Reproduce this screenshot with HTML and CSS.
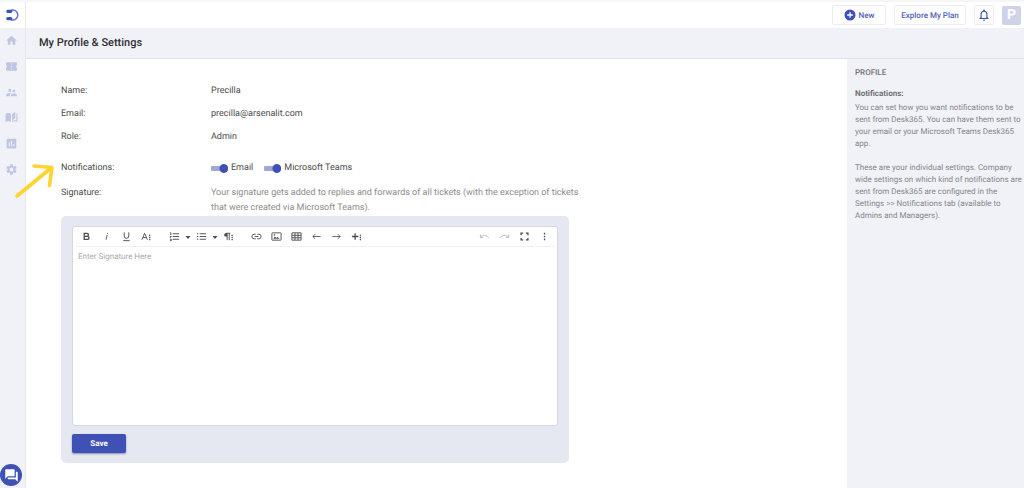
FILE: index.html
```
<!DOCTYPE html>
<html lang="en">
<head>
<meta charset="utf-8">
<title>My Profile &amp; Settings</title>
<link rel="stylesheet" href="styles.css">
</head>
<body>
<div class="app">
  <aside class="rail">
    <a class="logo" href="#" aria-label="Home page">
      <svg width="14" height="14" viewBox="0 0 14 14" fill="none"><path d="M6 2h2a4.500 4.700 0 0 1 0 10H6" stroke="#6572d0" stroke-width="1.500"/><path d="M2.800 3.300h3M2.800 10.700h3" stroke="#3f51b5" stroke-width="3.200" stroke-linecap="round"/></svg>
    </a>
    <nav class="nav">
      <a href="#" aria-label="Dashboard"><svg class="ico" viewBox="0 0 24 24"><path d="M10 20v-6h4v6h5v-8h3L12 3 2 12h3v8z"/></svg></a>
      <a href="#" aria-label="Tickets"><svg class="ico" viewBox="0 0 24 24"><path d="M22 10V5a1 1 0 0 0-1-1H3a1 1 0 0 0-1 1v5a2 2 0 0 1 0 4v5a1 1 0 0 0 1 1h18a1 1 0 0 0 1-1v-5a2 2 0 0 1 0-4zm-9 7.500h-2v-2h2v2zm0-4.500h-2v-2h2v2zm0-4.500h-2v-2h2v2z"/></svg></a>
      <a href="#" aria-label="Contacts"><svg class="ico" viewBox="0 0 24 24"><path d="M16.500 12a2.500 2.500 0 1 0 0-5 2.500 2.500 0 0 0 0 5zM9 11a3 3 0 1 0 0-6 3 3 0 0 0 0 6zm7.500 3c-1.830 0-5.500.92-5.500 2.750V19h11v-2.250C22 14.920 18.330 14 16.500 14zM9 13c-2.330 0-7 1.170-7 3.500V19h7v-2.250c0-.85.33-2.340 2.370-3.470C10.500 13.100 9.660 13 9 13z"/></svg></a>
      <a href="#" aria-label="Knowledge base"><svg class="ico" viewBox="0 0 24 24"><path d="M1 5c3-1.500 7-1.500 10 0v15c-3-1.500-7-1.500-10 0zM13 6l6-5v12l-6 5zM21 4l2 1v15c-3-1.500-7-1.500-10 0v-1.500c2-1 5-1.500 8-1z"/></svg></a>
      <a href="#" aria-label="Reports"><svg class="ico" viewBox="0 0 24 24"><path d="M19 3H5a2 2 0 0 0-2 2v14c0 1.100.9 2 2 2h14a2 2 0 0 0 2-2V5a2 2 0 0 0-2-2zM9 17H7v-7h2v7zm4 0h-2V7h2v10zm4 0h-2v-4h2v4z"/></svg></a>
      <a href="#" aria-label="Settings"><svg class="ico" viewBox="0 0 24 24"><path d="M19.140 12.940a7 7 0 0 0 0-1.880l2.030-1.580a.5.5 0 0 0 .12-.61l-1.920-3.320a.5.5 0 0 0-.59-.22l-2.390.96a7 7 0 0 0-1.620-.94l-.36-2.540A.5.5 0 0 0 13.920 2.400h-3.840a.5.5 0 0 0-.47.41l-.36 2.540c-.59.24-1.130.57-1.620.94l-2.390-.96a.5.5 0 0 0-.59.22L2.740 8.870a.5.5 0 0 0 .12.61l2.030 1.580a7 7 0 0 0 0 1.880l-2.030 1.580a.5.5 0 0 0-.12.61l1.920 3.320c.12.22.37.29.59.22l2.390-.96c.5.38 1.030.7 1.620.94l.36 2.540c.05.24.24.41.48.41h3.840c.24 0 .44-.17.47-.41l.36-2.540a7 7 0 0 0 1.620-.94l2.390.96c.22.08.47 0 .59-.22l1.920-3.320a.5.5 0 0 0-.12-.61zM12 15.600a3.600 3.600 0 1 1 0-7.200 3.600 3.600 0 0 1 0 7.200z"/></svg></a>
    </nav>
    <button class="chat" type="button" aria-label="Open chat"><svg width="15" height="15" viewBox="0 0 24 24" fill="#fff"><path d="M21 6h-2v9H6v2a1 1 0 0 0 1 1h11l4 4V7a1 1 0 0 0-1-1zm-4 6V3a1 1 0 0 0-1-1H3a1 1 0 0 0-1 1v14l4-4h10a1 1 0 0 0 1-1z"/></svg></button>
  </aside>

  <div class="page">
    <header class="topbar">
      <button class="btn btn-new" type="button"><svg width="12" height="12" viewBox="0 0 12 12"><circle cx="6" cy="6" r="5.500" fill="#3f51b5"/><path d="M6 3.200v5.600M3.200 6h5.600" stroke="#fff" stroke-width="1.300"/></svg>New</button>
      <button class="btn btn-plan" type="button">Explore My Plan</button>
      <button class="btn btn-bell" type="button" aria-label="Notifications"><svg width="14" height="14" viewBox="0 0 24 24" fill="#3f51b5"><path d="M12 22a2 2 0 0 0 2-2h-4c0 1.100.9 2 2 2zm6-6v-5c0-3.070-1.630-5.640-4.500-6.320V4a1.500 1.500 0 0 0-3 0v.68C7.640 5.360 6 7.920 6 11v5l-2 2v1h16v-1l-2-2zm-2 1H8v-6c0-2.480 1.510-4.500 4-4.500s4 2.020 4 4.500v6z"/></svg></button>
      <button class="avatar" type="button">P</button>
    </header>
    <div class="titlebar"><h1>My Profile &amp; Settings</h1></div>

    <div class="body">
      <main class="main">
        <svg class="arrow" width="44" height="38" viewBox="0 0 44 38" fill="none" stroke="#ffd42e" stroke-width="3.600" stroke-linecap="round" stroke-linejoin="round"><path d="M4 34 38 6M21 4l18 1.500-2.500 18"/></svg>
        <dl class="fields">
          <div class="row"><dt>Name:</dt><dd>Precilla</dd></div>
          <div class="row"><dt>Email:</dt><dd>precilla@arsenalit.com</dd></div>
          <div class="row"><dt>Role:</dt><dd>Admin</dd></div>
          <div class="row row-notify"><dt>Notifications:</dt><dd class="switches">
            <label class="switch"><input type="checkbox" role="switch" checked>Email</label>
            <label class="switch"><input type="checkbox" role="switch" checked>Microsoft Teams</label>
          </dd></div>
          <div class="row row-sign"><dt>Signature:</dt><dd>Your signature gets added to replies and forwards of all tickets (with the exception of tickets that were created via Microsoft Teams).</dd></div>
        </dl>
        <form class="panel">
          <div class="editor">
            <div class="toolbar" role="toolbar" aria-label="Formatting">
              <div class="group">
                <button type="button" aria-label="Bold"><svg viewBox="0 0 24 24"><path d="M7 5h6a3.200 3.200 0 0 1 0 6.500H7zM7 11.500h7a3.500 3.500 0 0 1 0 7H7z" class="heavy"/></svg></button>
                <button type="button" aria-label="Italic"><svg viewBox="0 0 24 24"><path d="M13.500 9 11 19M14.500 4l-.4 2"/></svg></button>
                <button type="button" aria-label="Underline"><svg viewBox="0 0 24 24"><path d="M7 3v8a5 5 0 0 0 10 0V3M5 21h14"/></svg></button>
                <button type="button" aria-label="More text"><svg viewBox="0 0 24 24"><path d="M2 19 8 5l6 14M4.500 14.500h7"/><path d="M19 8v3M19 12.500v3M19 17v3" class="heavy"/></svg></button>
              </div>
              <div class="group">
                <button type="button" aria-label="Ordered list"><svg viewBox="0 0 24 24"><path d="M8 6h14M8 12h14M8 18h14M2 4h2v5M2 12h3l-3 3M2 18h3v3H2"/></svg></button>
                <button class="caret" type="button" aria-label="Ordered list styles"><svg viewBox="0 0 8 8"><path d="M1.500 3h5L4 6z" class="solid"/></svg></button>
                <button type="button" aria-label="Bullet list"><svg viewBox="0 0 24 24"><path d="M8 6h14M8 12h14M8 18h14M2 6h3M2 12h3M2 18h3"/></svg></button>
                <button class="caret" type="button" aria-label="Bullet list styles"><svg viewBox="0 0 8 8"><path d="M1.500 3h5L4 6z" class="solid"/></svg></button>
                <button type="button" aria-label="More paragraph"><svg viewBox="0 0 24 24"><path d="M9 5H6a3.500 3.500 0 0 0 0 7h3z" class="solid"/><path d="M6 5h10M9 5v15M13.500 5v15"/><path d="M20 8v3M20 12.500v3M20 17v3" class="heavy"/></svg></button>
              </div>
              <div class="group">
                <button type="button" aria-label="Insert link"><svg viewBox="0 0 24 24"><path d="M10.500 7H7a5 5 0 0 0 0 10h3.500M13.500 7H17a5 5 0 0 1 0 10h-3.500M8 12h8"/></svg></button>
                <button type="button" aria-label="Insert image"><svg viewBox="0 0 24 24"><rect x="2" y="4" width="20" height="16" rx="1"/><path d="m5 17 3.500-5 3 3 2.500-2 5 4z" class="solid"/><circle cx="7.500" cy="8.500" r="1"/></svg></button>
                <button type="button" aria-label="Insert table"><svg viewBox="0 0 24 24"><path d="M2 4h20v16H2zM2 9.500h20M2 14.700h20M8.700 4v16M15.300 4v16"/></svg></button>
                <button type="button" aria-label="Outdent"><svg viewBox="0 0 24 24"><path d="M21 12H4M9 7l-5 5 5 5" class="thin"/></svg></button>
                <button type="button" aria-label="Indent"><svg viewBox="0 0 24 24"><path d="M3 12h17M15 7l5 5-5 5" class="thin"/></svg></button>
                <button type="button" aria-label="More rich content"><svg viewBox="0 0 24 24"><path d="M2 12h14M9 5v14M20.500 8v3M20.500 12.500v3M20.500 17v3" class="heavy"/></svg></button>
              </div>
              <div class="group group-end">
                <button type="button" aria-label="Undo" disabled><svg viewBox="0 0 24 24"><path d="M3 8v6h6M3.500 13.500C8 8 17 8 21 15"/></svg></button>
                <button type="button" aria-label="Redo" disabled><svg viewBox="0 0 24 24"><path d="M21 8v6h-6M20.500 13.500C16 8 7 8 3 15"/></svg></button>
                <button type="button" aria-label="Full screen"><svg viewBox="0 0 24 24"><path d="M4.500 9V4.500H9M15 4.500h4.500V9M19.500 15v4.500H15M9 19.500H4.500V15" class="heavy"/></svg></button>
                <button type="button" aria-label="More"><svg viewBox="0 0 24 24"><path d="M12 4v3.500M12 10.300v3.500M12 16.500V20" class="heavy"/></svg></button>
              </div>
            </div>
            <textarea class="text" aria-label="Signature" placeholder="Enter Signature Here"></textarea>
          </div>
          <button class="save" type="button">Save</button>
        </form>
      </main>
      <aside class="help">
        <h2>PROFILE</h2>
        <h3>Notifications:</h3>
        <p>You can set how you want notifications to be sent from Desk365. You can have them sent to your email or your Microsoft Teams Desk365 app.</p>
        <p>These are your individual settings. Company wide settings on which kind of notifications are sent from Desk365 are configured in the Settings &gt;&gt; Notifications tab (available to Admins and Managers).</p>
      </aside>
    </div>
  </div>
</div>
</body>
</html>
```
FILE: styles.css
```
* { box-sizing: border-box; }
body { margin: 0; font-family: Roboto, "Liberation Sans", sans-serif; font-size: 9px; color: #4c4c4c; background: #fff; text-rendering: geometricPrecision; }
button { font: inherit; padding: 0; border: 0; background: none; text-rendering: inherit; }
h1, h2, h3, p, dl, dd { margin: 0; }

.app { display: flex; min-height: 100vh; border-top: 2px solid #f6f6f7; }

.rail { width: 26px; flex: none; display: flex; flex-direction: column; background: #f1f2f8; border-right: 1px solid #e6e7f0; }
.logo { height: 26px; display: flex; align-items: center; justify-content: center; padding-right: 2px; background: #fff; }
.nav { height: 154px; display: flex; flex-direction: column; padding-right: 2px; }
.nav a { flex: 1; display: flex; align-items: center; justify-content: center; }
.ico { width: 13px; height: 13px; fill: #c0c6e2; }
.chat { width: 22px; height: 22px; margin: auto 0 2px; display: flex; align-items: center; justify-content: center; border-radius: 50%; background: #3f51b5; }

.page { flex: 1; min-width: 0; display: flex; flex-direction: column; }
.topbar { height: 26px; display: flex; align-items: center; justify-content: flex-end; gap: 8px; padding-right: 3px; }
.btn { height: 20px; display: flex; align-items: center; justify-content: center; gap: 3px; border: 1px solid #ececf1; border-radius: 2px; background: #fff; color: #5360ba; font-size: 8px; font-weight: 500; }
.btn-new { width: 54px; }
.btn-plan { width: 72px; }
.btn-bell { width: 20px; }
.avatar { width: 19px; height: 19px; border-radius: 2px; background: #cfd3e8; color: #fff; font-size: 14px; font-weight: 700; }
.titlebar { height: 31px; display: flex; align-items: center; padding: 0 13px 2px; background: #f1f2f8; border-bottom: 1px solid #dfe1ee; }
.titlebar h1 { font-size: 11px; font-weight: 500; color: #2f2f33; }

.body { flex: 1; display: flex; }
.main { flex: 1; position: relative; padding: 21px 35px 24px; }
.arrow { position: absolute; left: -13px; top: 103px; }

.row { display: flex; line-height: 23px; }
.row dt { width: 150px; flex: none; }
.row-notify { margin-top: 8px; }
.row-sign { margin-top: 6px; line-height: 15px; max-width: 522px; }
.row-sign dd { color: #8c8c8c; }
.switches { display: flex; gap: 11px; }
.switch { display: flex; align-items: center; gap: 3px; }
.switch input { appearance: none; width: 17px; height: 9px; margin: 0; border-radius: 4px; background: radial-gradient(circle at 13px 50%, #3f51b5 4px, transparent 5px), linear-gradient(#9fa8da, #9fa8da) 0 50% / 14px 5px no-repeat; }

.panel { max-width: 508px; padding: 10px 11px; border-radius: 5px; background: #e5e8f1; }
.editor { display: flex; flex-direction: column; height: 200px; border: 1px solid #d6d8e0; border-radius: 3px; background: #fff; }
.toolbar { display: flex; gap: 8px; margin: 0 3px; border-bottom: 1px solid #f0f0f0; }
.group { display: flex; align-items: center; }
.group-end { margin-left: auto; }
.toolbar button { width: 20px; height: 19px; display: flex; align-items: center; justify-content: center; }
.toolbar svg { width: 11px; height: 11px; fill: none; stroke: #4c4c4c; stroke-width: 2; }
.toolbar .caret { width: 7px; }
.toolbar .caret svg { flex: none; width: 8px; height: 8px; }
.toolbar button:disabled svg { stroke: #b5b5b5; }
.toolbar .heavy { stroke-width: 2.800; }
.toolbar .thin { stroke-width: 1.800; }
.toolbar .solid { fill: #4c4c4c; stroke: none; }
.text { flex: 1; padding: 4px 5px; border: 0; resize: none; outline: 0; background: none; font: 8px/11px Roboto, Arial, sans-serif; color: #444; text-rendering: inherit; }
.text::placeholder { color: #aaa; opacity: 1; }
.save { display: block; width: 54px; height: 19px; margin-top: 8px; border-radius: 2px; background: #3f51b5; color: #fff; font-size: 8px; font-weight: 700; box-shadow: 0 1px 2px #8b90ac; }

.help { width: 177px; flex: none; padding: 8px 0 8px 8px; background: #f1f2f8; font-size: 8px; line-height: 12px; color: #858589; }
.help h2, .help h3 { font-size: 8px; line-height: 12px; font-weight: 500; color: #707074; }
.help h3 { margin: 9px 0 2px; font-weight: 700; }
.help p + p { margin-top: 12px; }
```
